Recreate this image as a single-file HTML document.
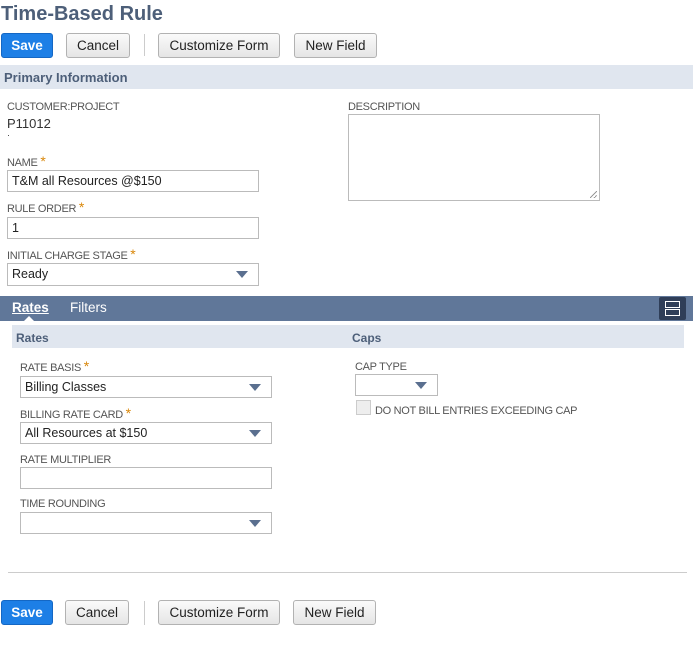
<html><head><style>
body{margin:0;width:693px;height:649px;background:#fff;font-family:"Liberation Sans",sans-serif;position:relative;overflow:hidden;color:#333}
div,span{position:absolute;box-sizing:border-box}
.btn{height:25px;border:1px solid #b2b2b2;border-radius:3px;background:linear-gradient(#fafafa,#e5e5e5);font-size:13.5px;color:#222;text-align:center;line-height:23px}
.save{background:#1d7fe6;border-color:#1467c4;color:#fff;font-weight:bold}
.lbl{font-size:11px;color:#555;text-transform:uppercase;letter-spacing:-0.3px}
.star{color:#d9870a;font-size:14px}
.inp{height:22px;border:1px solid #bbb;background:#fff;font-size:12.5px;color:#222;padding:3px 4px;line-height:14px}
.arr{right:10px;top:7px;width:0;height:0;border-left:6px solid transparent;border-right:6px solid transparent;border-top:7px solid #5a6f8f}
</style></head><body>
<div style="left:1px;top:3px;font-size:20px;font-weight:bold;color:#4d5f79">Time-Based Rule</div>
<div class="btn save" style="left:1px;top:33px;width:52px">Save</div>
<div class="btn" style="left:66px;top:33px;width:64px">Cancel</div>
<div style="left:144px;top:34px;width:1px;height:22px;background:#ccc"></div>
<div class="btn" style="left:158px;top:33px;width:122px">Customize Form</div>
<div class="btn" style="left:294px;top:33px;width:83px">New Field</div>
<div style="left:0;top:65px;width:693px;height:24px;background:#e0e6ef;font-size:13px;font-weight:bold;color:#4d5f79;padding:5px 4px">Primary Information</div>
<div class="lbl" style="left:7px;top:101px">Customer:Project</div>
<div style="left:7px;top:116px;font-size:13px;color:#333">P11012</div>
<div style="left:7px;top:130px;font-size:9px">·</div>
<div class="lbl" style="left:7px;top:153px">Name <span class="star" style="position:static">*</span></div>
<div class="inp" style="left:7px;top:170px;width:252px">T&amp;M all Resources @$150</div>
<div class="lbl" style="left:7px;top:199px">Rule Order <span class="star" style="position:static">*</span></div>
<div class="inp" style="left:7px;top:217px;width:252px">1</div>
<div class="lbl" style="left:7px;top:246px">Initial Charge Stage <span class="star" style="position:static">*</span></div>
<div class="inp" style="left:7px;top:263px;width:252px;height:23px">Ready<div class="arr"></div></div>
<div class="lbl" style="left:348px;top:101px">Description</div>
<div style="left:348px;top:114px;width:252px;height:87px;border:1px solid #bbb"><div style="right:2px;bottom:2px;width:7px;height:7px;background:linear-gradient(135deg,transparent 45%,#999 45%,#999 55%,transparent 55%,transparent 75%,#999 75%,#999 85%,transparent 85%)"></div></div>
<div style="left:0;top:296px;width:693px;height:25px;background:#607799"></div>
<div style="left:12px;top:300px;font-size:13.5px;font-weight:bold;color:#fff;text-decoration:underline;text-decoration-thickness:1px">Rates</div>
<div style="left:24px;top:316px;width:0;height:0;border-left:5px solid transparent;border-right:5px solid transparent;border-bottom:5px solid #fff"></div>
<div style="left:70px;top:300px;font-size:13.5px;color:#fff">Filters</div>
<div style="left:659px;top:297px;width:27px;height:23px;background:#2f3e58;border-radius:2px"><div style="left:6px;top:4px;width:15px;height:7px;border:1.5px solid #fff"></div><div style="left:6px;top:12px;width:15px;height:7px;border:1.5px solid #fff"></div></div>
<div style="left:12px;top:325px;width:672px;height:23px;background:#e0e6ef"></div>
<div style="left:16px;top:331px;font-size:12px;font-weight:bold;color:#4d5f79">Rates</div>
<div style="left:352px;top:331px;font-size:12px;font-weight:bold;color:#4d5f79">Caps</div>
<div class="lbl" style="left:20px;top:358px">Rate Basis <span class="star" style="position:static">*</span></div>
<div class="inp" style="left:20px;top:376px;width:252px">Billing Classes<div class="arr"></div></div>
<div class="lbl" style="left:20px;top:405px">Billing Rate Card <span class="star" style="position:static">*</span></div>
<div class="inp" style="left:20px;top:422px;width:252px">All Resources at $150<div class="arr"></div></div>
<div class="lbl" style="left:20px;top:454px">Rate Multiplier</div>
<div class="inp" style="left:20px;top:467px;width:252px"></div>
<div class="lbl" style="left:20px;top:498px">Time Rounding</div>
<div class="inp" style="left:20px;top:512px;width:252px"><div class="arr"></div></div>
<div class="lbl" style="left:355px;top:361px">Cap Type</div>
<div class="inp" style="left:355px;top:374px;width:83px"><div class="arr"></div></div>
<div style="left:356px;top:400px;width:15px;height:15px;border:1px solid #ccc;background:#eee"></div>
<div class="lbl" style="left:375px;top:405px">Do not bill entries exceeding cap</div>
<div style="left:8px;top:572px;width:679px;height:1px;background:#ccc"></div>
<div class="btn save" style="left:1px;top:600px;width:52px">Save</div>
<div class="btn" style="left:65px;top:600px;width:64px">Cancel</div>
<div style="left:144px;top:601px;width:1px;height:24px;background:#ccc"></div>
<div class="btn" style="left:158px;top:600px;width:122px">Customize Form</div>
<div class="btn" style="left:293px;top:600px;width:83px">New Field</div>
</body></html>
